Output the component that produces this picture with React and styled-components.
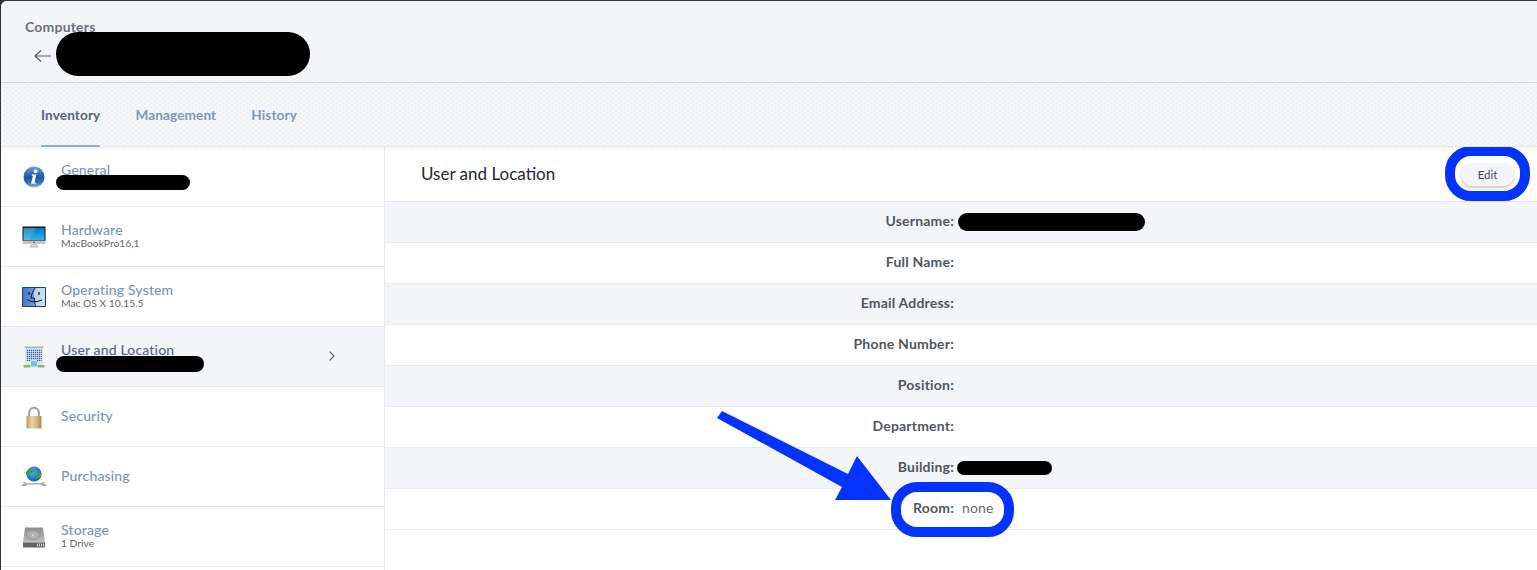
import React from "react";
import styled, { createGlobalStyle } from "styled-components";

const Global = createGlobalStyle`
  html, body { margin: 0; padding: 0; background: #2f2f2f; }
  body { font-family: "Lato", "Liberation Sans", sans-serif; overflow: hidden; }
`;

const Frame = styled.div`
  position: relative;
  width: 1537px;
  height: 570px;
  overflow: hidden;
  background: #333;
  padding: 1px 0 0 1px;
  box-sizing: border-box;
`;
const Window = styled.div`
  height: 569px;
  background: #fff;
  border-top-left-radius: 6px;
  overflow: hidden;
  display: flex;
  flex-direction: column;
`;
const Header = styled.header`
  height: 82px;
  flex: none;
  box-sizing: border-box;
  background: #f4f5f9;
  border-bottom: 1px solid #d9dbe2;
  padding: 18px 0 0 24px;
`;
const Crumb = styled.div`
  font-size: 14px;
  line-height: 16px;
  font-weight: 700;
  letter-spacing: 0.2px;
  color: #6d7079;
`;
const Back = styled.div`
  margin: 13px 0 0 9px;
  height: 16px;
  color: #55585f;
  display: flex;
`;
const Tabs = styled.nav`
  height: 64px;
  flex: none;
  box-sizing: border-box;
  display: flex;
  gap: 35px;
  padding-left: 40px;
  background-color: #f7f8fa;
  background-image: radial-gradient(circle at 50% 50%, #eef0f3 1.2px, transparent 1.6px),
    radial-gradient(circle at 50% 50%, #eef0f3 1.2px, transparent 1.6px);
  background-size: 6px 5px;
  background-position: 0 0, 3px 2.5px;
  border-bottom: 1px solid #e8e9ee;
  box-shadow: 0 1px 3px rgba(60, 70, 90, 0.08);
  position: relative;
  z-index: 1;
`;
const Tab = styled.a`
  height: 62px;
  line-height: 64px;
  font-size: 13.6px;
  font-weight: 700;
  letter-spacing: 0.12px;
  color: ${(p) => (p.$active ? "#5b6478" : "#7f97bd")};
  border-bottom: ${(p) => (p.$active ? "2px solid #92abd2" : "2px solid transparent")};
`;
const Body = styled.div`
  flex: 1;
  display: flex;
  min-height: 0;
`;
const Sidebar = styled.aside`
  width: 384px;
  flex: none;
  box-sizing: border-box;
  border-right: 1px solid #e6e8ee;
`;
const SideRow = styled.div`
  height: 60px;
  box-sizing: border-box;
  display: flex;
  align-items: center;
  position: relative;
  padding-left: 17px;
  border-bottom: 1px solid #e6e8ee;
  background: ${(p) => (p.$active ? "#f4f5f9" : "#fff")};
`;
const IconBox = styled.div`
  width: 32px;
  height: 32px;
  margin-right: 11px;
  flex: none;
  display: flex;
  align-items: center;
  justify-content: center;
  padding-top: 1px;
  box-sizing: border-box;
`;
const SideText = styled.div`
  display: flex;
  flex-direction: column;
  padding-bottom: 2px;
`;
const SideTitle = styled.div`
  font-size: 14px;
  line-height: 15px;
  font-weight: 500;
  letter-spacing: 0.15px;
  color: ${(p) => (p.$active ? "#5b6680" : "#7d93b8")};
`;
const SideSub = styled.div`
  font-size: 10.3px;
  line-height: 13px;
  color: #62656c;
`;
const Chevron = styled.div`
  position: absolute;
  right: 48px;
  top: 50%;
  transform: translateY(calc(-50% - 1px));
  display: flex;
  color: #5f6675;
`;
const Main = styled.main`
  flex: 1;
  min-width: 0;
`;
const TitleBar = styled.div`
  height: 55px;
  box-sizing: border-box;
  display: flex;
  align-items: center;
  justify-content: space-between;
  padding: 0 23px 0 36px;
  border-bottom: 1px solid #e6e8ee;
`;
const Title = styled.h2`
  margin: 0 0 2px;
  font-size: 17px;
  font-weight: 400;
  color: #26282c;
`;
const EditButton = styled.button`
  width: 53px;
  height: 23px;
  border: 0;
  border-radius: 12px;
  background: #f4f5f9;
  box-shadow: 0 2px 3px rgba(60, 60, 70, 0.28);
  font: 400 11.5px "Lato", sans-serif;
  color: #45484f;
  padding: 0;
`;
const Row = styled.div`
  height: 41px;
  box-sizing: border-box;
  display: grid;
  grid-template-columns: 569px 1fr;
  column-gap: 8px;
  align-items: center;
  padding-bottom: 3px;
  border-bottom: 1px solid #e8eaef;
  background: ${(p) => (p.$alt ? "#f4f5f9" : "#fff")};
`;
const Label = styled.div`
  text-align: right;
  font-size: 14px;
  font-weight: 700;
  letter-spacing: 0.2px;
  color: #53565d;
`;
const Value = styled.div`
  font-size: 14px;
  letter-spacing: 0.15px;
  color: #66696f;
`;
const Redaction = styled.div`
  position: absolute;
  background: #000;
  border-radius: 22px;
  left: ${(p) => p.$x}px;
  top: ${(p) => p.$y}px;
  width: ${(p) => p.$w}px;
  height: ${(p) => p.$h}px;
`;
const Ring = styled.div`
  position: absolute;
  box-sizing: border-box;
  border: 10px solid #0433ff;
  border-radius: 26px;
  left: ${(p) => p.$x}px;
  top: ${(p) => p.$y}px;
  width: ${(p) => p.$w}px;
  height: ${(p) => p.$h}px;
`;
const ArrowSvg = styled.svg`
  position: absolute;
  left: 710px;
  top: 405px;
`;

const InfoIcon = () => (
  <svg width="22" height="22" viewBox="0 0 22 22">
    <defs>
      <linearGradient id="inf" x1="0" y1="0" x2="0" y2="1">
        <stop offset="0" stopColor="#6f9fd8" />
        <stop offset="0.5" stopColor="#1a57a6" />
        <stop offset="0.75" stopColor="#2a6fbb" />
        <stop offset="1" stopColor="#8cc0e8" />
      </linearGradient>
    </defs>
    <circle cx="11" cy="11" r="10.5" fill="url(#inf)" />
    <circle cx="12.6" cy="5.2" r="1.9" fill="#fff" />
    <path d="M9 8.600h4.400l-2 7.900h1.500l-.4 1.300H8l2-8h-1.300z" fill="#fff" />
  </svg>
);
const MonitorIcon = () => (
  <svg width="24" height="22" viewBox="0 0 24 22">
    <defs>
      <linearGradient id="mon" x1="0" y1="0" x2="0" y2="1">
        <stop offset="0" stopColor="#0b78bd" />
        <stop offset="1" stopColor="#2fb4ee" />
      </linearGradient>
    </defs>
    <path d="M0.500 0.500h23v14.500H0.500z" fill="#121418" />
    <path d="M1.500 2h21v12H1.500z" fill="url(#mon)" />
    <path d="M1.500 2h12L7 14H1.500z" fill="#fff" fillOpacity="0.14" />
    <path d="M0.500 14.500h23v3.500H0.500z" fill="#c4c6c9" />
    <circle cx="12" cy="16.200" r="0.800" fill="#34363a" />
    <path d="M9 18h6l1 2.500H8z" fill="#d2d3d5" />
    <path d="M7.500 20.300h9V21.500h-9z" fill="#b5b7ba" />
  </svg>
);
const FinderIcon = () => (
  <svg width="24" height="20" viewBox="0 0 24 20">
    <defs>
      <linearGradient id="fin" x1="0" y1="0" x2="1" y2="0">
        <stop offset="0" stopColor="#4a74c4" />
        <stop offset="0.5" stopColor="#6f9ad8" />
        <stop offset="0.52" stopColor="#b4d0ee" />
        <stop offset="1" stopColor="#d0e2f4" />
      </linearGradient>
    </defs>
    <path d="M0.500 0.500h23v19h-23z" fill="url(#fin)" stroke="#1f3f95" />
    <path d="M13.500 0.500C11 4 9.500 7 9 11h3.500c-.2 3 .3 6 1 8.500M5 12.500c4 3 10 3 15 .3" fill="none" stroke="#0c1220" strokeWidth="1" />
    <path d="M7 5v3M17 5v3" stroke="#0c1220" strokeWidth="1.200" />
  </svg>
);
const BuildingIcon = () => (
  <svg width="22" height="22" viewBox="0 0 22 22">
    <defs>
      <pattern id="win" width="2" height="2" patternUnits="userSpaceOnUse">
        <rect width="1.300" height="1.300" fill="#2f62ad" />
      </pattern>
    </defs>
    <path d="M2 1h18v19H2z" fill="#e3e6e9" />
    <path d="M1.500 0.500h19v1.500h-19z" fill="#a9adb0" />
    <path d="M3.200 3h15.600v12H3.200z" fill="url(#win)" />
    <path d="M8 14h6v6.500H8z" fill="#6fc6ee" />
    <path d="M8 14h6v1H8z" fill="#e3e6e9" />
    <path d="M0.500 19h7v2.500h-7zM14.500 19h7v2.500h-7z" fill="#7fbf5a" />
  </svg>
);
const LockIcon = () => (
  <svg width="16" height="23" viewBox="0 0 16 23">
    <defs>
      <linearGradient id="lk" x1="0" y1="0" x2="1" y2="0">
        <stop offset="0" stopColor="#b89a5c" />
        <stop offset="0.35" stopColor="#e6d5a2" />
        <stop offset="0.7" stopColor="#d0b67c" />
        <stop offset="1" stopColor="#a5894f" />
      </linearGradient>
    </defs>
    <path d="M3.200 11V6.500a4.800 4.800 0 0 1 9.600 0V11" fill="none" stroke="#9a9da2" strokeWidth="2" />
    <path d="M0.500 10h15v12.500h-15z" fill="url(#lk)" />
  </svg>
);
const GlobeIcon = () => (
  <svg width="28" height="22" viewBox="0 0 28 22">
    <defs>
      <radialGradient id="gl" cx="0.4" cy="0.35" r="0.7">
        <stop offset="0" stopColor="#4fb4ee" />
        <stop offset="1" stopColor="#0d56b8" />
      </radialGradient>
      <linearGradient id="wr" x1="0" y1="0" x2="0" y2="1">
        <stop offset="0" stopColor="#d4d5d7" />
        <stop offset="1" stopColor="#8d8f92" />
      </linearGradient>
    </defs>
    <circle cx="14" cy="8" r="7.600" fill="url(#gl)" />
    <path d="M9 3.500c2-1 4-.5 5 .5s-1 3-3 3-3.500 2-2 4-3-2-3-4 1.500-3 3-3.500zM16 8c2-1.500 4-1 5 0s-1 4-3 5-3-3-2-5z" fill="#3d9e46" />
    <path d="M0.500 16 5 15.500l2 1.500h14l2-1.500 4.500.5-3.500 1 .5 1 3 1.500-4.500.5-2-1.500H7l-2 1.500-4.500-.5 3-1.500.5-1z" fill="url(#wr)" />
  </svg>
);
const DiskIcon = () => (
  <svg width="22" height="21" viewBox="0 0 22 21">
    <defs>
      <linearGradient id="dk" x1="0" y1="0" x2="0" y2="1">
        <stop offset="0" stopColor="#8b8d8f" />
        <stop offset="1" stopColor="#bcbec0" />
      </linearGradient>
    </defs>
    <path d="M2 0.500h18l2 15H0z" fill="url(#dk)" />
    <ellipse cx="10" cy="8" rx="6.500" ry="4.500" fill="#aeb0b2" stroke="#929496" />
    <circle cx="10" cy="8" r="1.300" fill="#cfd0d1" />
    <path d="M0 15.500h22V20.500H0z" fill="#5f6163" />
    <path d="M14 16.500h1v3h-1zM16 16.500h1v3h-1zM18 16.500h1v3h-1zM20 16.500h1v3h-1z" fill="#d5d6d7" />
  </svg>
);

const sideItems = [
  { title: "General", Icon: InfoIcon, hasHidden: true },
  { title: "Hardware", sub: "MacBookPro16,1", Icon: MonitorIcon },
  { title: "Operating System", sub: "Mac OS X 10.15.5", Icon: FinderIcon },
  { title: "User and Location", Icon: BuildingIcon, active: true, hasHidden: true },
  { title: "Security", Icon: LockIcon },
  { title: "Purchasing", Icon: GlobeIcon },
  { title: "Storage", sub: "1 Drive", Icon: DiskIcon },
];
const fields = [
  ["Username:", ""],
  ["Full Name:", ""],
  ["Email Address:", ""],
  ["Phone Number:", ""],
  ["Position:", ""],
  ["Department:", ""],
  ["Building:", ""],
  ["Room:", "none"],
];

export default function App() {
  return (
    <Frame>
      <Global />
      <Window>
        <Header>
          <Crumb>Computers</Crumb>
          <Back>
            <svg width="18" height="16" viewBox="0 0 18 16" fill="none" stroke="currentColor" strokeWidth="1.200">
              <path d="M1 8h16M7 2.500 1 8l6 5.500" />
            </svg>
          </Back>
        </Header>
        <Tabs>
          <Tab $active>Inventory</Tab>
          <Tab>Management</Tab>
          <Tab>History</Tab>
        </Tabs>
        <Body>
          <Sidebar>
            {sideItems.map(({ title, sub, Icon, active, hasHidden }) => (
              <SideRow key={title} $active={active}>
                <IconBox><Icon /></IconBox>
                <SideText>
                  <SideTitle $active={active}>{title}</SideTitle>
                  {(sub || hasHidden) && <SideSub>{sub || "\u00a0"}</SideSub>}
                </SideText>
                {active && (
                  <Chevron>
                    <svg width="8" height="12" viewBox="0 0 8 12" fill="none" stroke="currentColor" strokeWidth="1.200">
                      <path d="M1.500 1.500 6 6l-4.500 4.500" />
                    </svg>
                  </Chevron>
                )}
              </SideRow>
            ))}
          </Sidebar>
          <Main>
            <TitleBar>
              <Title>User and Location</Title>
              <EditButton>Edit</EditButton>
            </TitleBar>
            {fields.map(([label, value], i) => (
              <Row key={label} $alt={i % 2 === 0}>
                <Label>{label}</Label>
                <Value>{value}</Value>
              </Row>
            ))}
          </Main>
        </Body>
      </Window>
      <Redaction $x={56} $y={32} $w={254} $h={44} />
      <Redaction $x={56} $y={175} $w={134} $h={15} />
      <Redaction $x={56} $y={356} $w={148} $h={16} />
      <Redaction $x={958} $y={213} $w={187} $h={18} />
      <Redaction $x={957} $y={461} $w={95} $h={14} />
      <Ring $x={1445} $y={146} $w={85} $h={55} />
      <Ring $x={891} $y={482} $w={123} $h={55} />
      <ArrowSvg width="190" height="105" viewBox="710 405 190 105">
        <path d="M722 411 848 474 857 456 891 500 835 500 842 487 717 418z" fill="#0433ff" />
      </ArrowSvg>
    </Frame>
  );
}
